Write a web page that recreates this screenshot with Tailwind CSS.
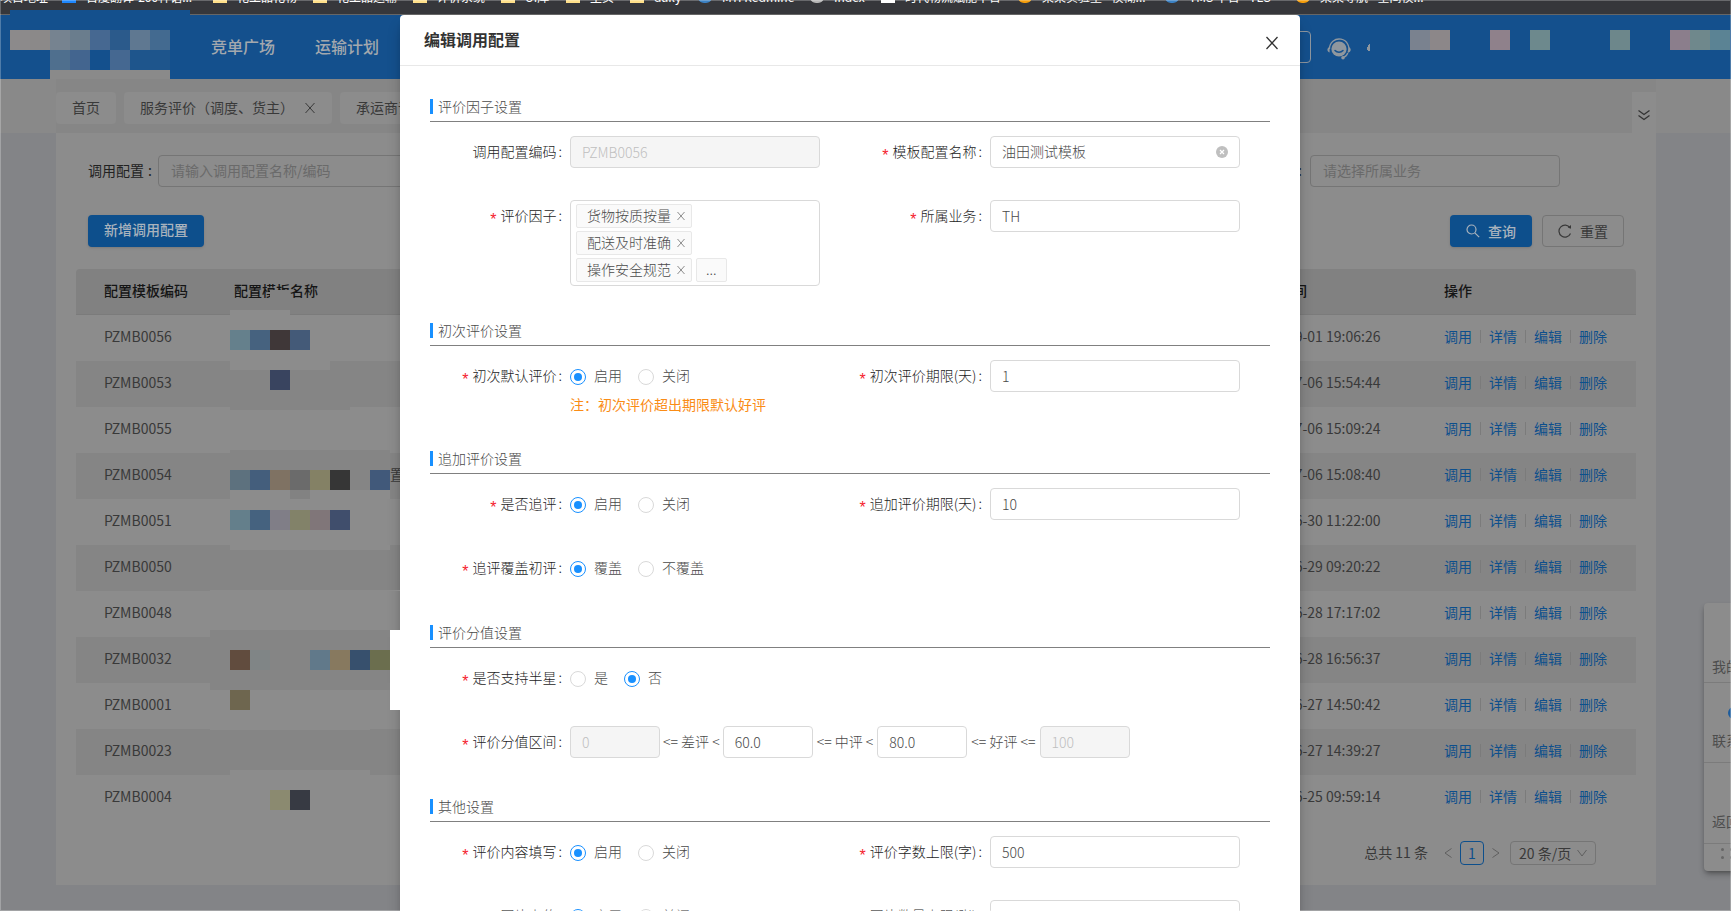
<!DOCTYPE html>
<html lang="zh-CN">
<head>
<meta charset="utf-8">
<title>编辑调用配置</title>
<script src="https://cdn.jsdelivr.net/npm/@tailwindcss/browser@4"></script>
</head>
<body class="relative h-screen overflow-hidden bg-[#838487] font-['Noto_Sans_CJK_SC',sans-serif] text-sm text-[#393939]">

<!-- Browser bookmark bar, scrolled almost out of view -->
<nav class="h-[15px] overflow-hidden border-b border-[#666] bg-[#36373b] text-xs text-white" aria-label="书签">
  <div class="-mt-3 flex h-[18px] items-center whitespace-nowrap leading-[18px]" id="bookmarks"></div>
</nav>

<header class="flex h-16 items-center bg-[#14508d] pl-[211px] pr-[380px] text-base font-medium text-[#a3a8ae]">
  <a href="#" class="w-[104px] pb-0.5">竞单广场</a>
  <a href="#" class="pb-0.5">运输计划</a>
  <div class="ml-auto flex items-center gap-4">
    <div class="h-8 w-[200px] rounded border border-[#8e969f]"></div>
    <svg class="mt-1 h-6 w-6" viewBox="0 0 24 24" fill="none">
      <path d="M2.500 12a9.700 9.700 0 1 1 18.600 3.600M20.800 16c-1 2.600-2.900 4-4.800 4.600" stroke="#8f979e" stroke-width="1.300"/>
      <circle cx="12" cy="12" r="7.600" fill="#8f979e"/>
      <path d="M8 13.500c2.200 2.300 5.800 2.300 8 0" stroke="#14508d" stroke-width="1.500" stroke-linecap="round"/>
      <path d="M2.600 10v5.500C1 15 .4 14 .4 12.800s.6-2.300 2.200-2.800zM21.600 10v5.500c1.600-.5 2.100-1.500 2.100-2.700s-.5-2.300-2.100-2.800z" fill="#8f979e"/>
      <circle cx="16" cy="20.800" r="1.800" fill="#8f979e"/>
    </svg>
  </div>
</header>

<!-- Page tabs -->
<div class="flex h-[54px] items-start bg-[#898989] px-14 pr-[75px]">
  <div class="flex h-full w-full items-start gap-2 bg-[#868686] pt-[13px]">
    <a href="#" class="flex h-8 items-center rounded bg-[#8c8c8c] px-4 pb-0.5">首页</a>
    <div class="flex h-8 w-[208px] shrink-0 items-center justify-between rounded bg-[#8c8c8c] px-4">
      <a href="#" class="pb-0.5">服务评价（调度、货主）</a>
      <button type="button" aria-label="关闭标签"><svg class="h-3 w-3" viewBox="0 0 12 12" stroke="#393939" fill="none"><path d="M1.500 1l9 10M10.500 1l-9 10"/></svg></button>
    </div>
    <a href="#" class="flex h-8 items-center rounded bg-[#8c8c8c] px-4 pb-0.5">承运商评价</a>
    <button type="button" aria-label="展开" class="ml-auto flex h-[41px] w-6 items-center justify-center bg-[#8c8c8c] pt-1">
      <svg class="h-3 w-3" viewBox="0 0 12 12" stroke="#333" stroke-width="1.300" fill="none"><path d="M.5 1.500L6 5.500l5.500-4M.5 6.500L6 10.500l5.500-4"/></svg>
    </button>
  </div>
</div>

<main class="ml-14 mr-[75px] h-[752px] bg-[#8c8c8c] px-5 pt-[22px]">
  <div class="flex items-center justify-between pl-3 pr-[76px]">
    <div class="flex items-center">
      <label for="q1" class="w-[70px] pb-[3px] text-[#222]">调用配置<span class="ml-1">:</span></label>
      <input id="q1" type="text" placeholder="请输入调用配置名称/编码" class="h-8 w-[250px] rounded border border-[#757575] bg-transparent px-3 pb-0.5 placeholder:text-[#6a6a6a]">
    </div>
    <div class="flex items-center gap-2">
      <label for="q2" class="pb-0.5 text-[#222]">所属业务 :</label>
      <input id="q2" type="text" placeholder="请选择所属业务" class="h-8 w-[250px] rounded border border-[#757575] bg-transparent px-3 pb-0.5 placeholder:text-[#6a6a6a]">
    </div>
  </div>

  <div class="mt-7 flex items-center justify-between pl-3 pr-3">
    <button type="button" class="h-8 w-[116px] rounded bg-[#0d4f8c] pb-1 font-medium text-[#a9b3bd] shadow-sm">新增调用配置</button>
    <div class="flex gap-[10px]">
      <button type="button" class="flex h-8 w-[82px] items-center justify-center gap-2 rounded bg-[#0d4f8c] font-medium text-[#a9b3bd] shadow-sm">
        <svg class="h-[14px] w-[14px]" viewBox="0 0 14 14" fill="none" stroke="#a9b3bd" stroke-width="1.200"><circle cx="5.500" cy="5.500" r="4.500"/><path d="M8.800 8.800l4.400 4.400"/></svg>查询
      </button>
      <button type="button" class="flex h-8 w-[82px] items-center justify-center gap-2 rounded border border-[#757575]">
        <svg class="h-[14px] w-[14px]" viewBox="0 0 14 14" fill="none" stroke="#393939" stroke-width="1.200"><path d="M12 3.800A6 6 0 1 0 12.500 9.500"/><path d="M13 1v3.800L9.800 3.600z" fill="#393939" stroke="none"/></svg>重置
      </button>
    </div>
  </div>

  <table class="mt-[22px] w-full table-fixed border-separate border-spacing-0 text-left">
    <colgroup><col class="w-[130px]"><col><col class="w-[193px]"><col class="w-[220px]"></colgroup>
    <thead>
      <tr class="h-[46px] text-[#151515]">
        <th class="rounded-tl border-b border-[#7b7b7b] bg-[#818181] pb-1 pl-7 font-medium">配置模板编码</th>
        <th class="border-b border-[#7b7b7b] bg-[#818181] pb-1 pl-7 font-medium">配置模板名称</th>
        <th class="border-b border-[#7b7b7b] bg-[#818181] pb-1 pl-7 font-medium">更新时间</th>
        <th class="rounded-tr border-b border-[#7b7b7b] bg-[#818181] pb-1 pl-7 font-medium">操作</th>
      </tr>
    </thead>
    <tbody id="rows"></tbody>
  </table>

  <div class="mt-5 flex h-6 items-center justify-end pr-10">
    <span class="pb-0.5">总共 11 条</span>
    <button type="button" aria-label="上一页" class="ml-4 flex h-6 w-4 items-center"><svg class="h-3 w-2" viewBox="0 0 8 12" fill="none" stroke="#5f5f5f"><path d="M7.500 1.500L1 6l6.500 4.500"/></svg></button>
    <button type="button" class="h-6 w-6 rounded border border-[#0d4f8c] text-[#0d4f8c] leading-5">1</button>
    <button type="button" aria-label="下一页" class="ml-2 flex h-6 w-[18px] items-center"><svg class="h-3 w-2" viewBox="0 0 8 12" fill="none" stroke="#5f5f5f"><path d="M.5 1.500L7 6 .5 10.500"/></svg></button>
    <div class="relative flex items-center">
      <select aria-label="每页条数" class="h-6 w-[86px] appearance-none rounded border border-[#757575] bg-transparent pl-2 leading-5"><option>20 条/页</option></select>
      <svg class="pointer-events-none absolute right-[9px] h-[10px] w-[10px]" viewBox="0 0 10 10" fill="none" stroke="#5f5f5f"><path d="M.5 2L5 8l4.500-6"/></svg>
    </div>
  </div>
</main>

<!-- Floating side tools -->
<aside class="absolute left-[1704px] top-[603px] h-[268px] w-[72px] rounded bg-[#8c8c8c] text-[#4d4d4d] shadow-md shadow-black/30">
  <a href="#" class="flex h-20 items-end border-b border-[#7b7b7b] pb-[6px] pl-2">我的消息</a>
  <a href="#" class="relative flex h-20 items-end border-b border-[#7b7b7b] pb-3 pl-2"><span class="absolute left-6 top-6 h-3 w-6 rounded-full bg-[#1d5c9c]"></span>联系客服</a>
  <a href="#" class="flex h-[81px] items-end border-b border-[#7b7b7b] pb-3 pl-2">返回顶部</a>
  <div class="ml-[17px] mt-1 grid w-3 grid-cols-2 gap-[5px]">
    <i class="h-[3px] w-[3px] rounded-full bg-[#666]"></i><i class="h-[3px] w-[3px] rounded-full bg-[#666]"></i>
    <i class="h-[3px] w-[3px] rounded-full bg-[#666]"></i><i class="h-[3px] w-[3px] rounded-full bg-[#666]"></i>
  </div>
</aside>

<!-- Dialog -->
<div class="absolute inset-x-0 bottom-0 top-[15px] flex justify-center overflow-hidden pr-[31px]">
  <form role="dialog" aria-labelledby="dlg" class="h-[1100px] w-[900px] rounded-t bg-white font-light text-[#4a4a4a] shadow-lg shadow-black/30">
    <div class="flex h-[51px] items-center justify-between border-b border-[#e8e8e8] pl-6 pr-[21px]">
      <h1 id="dlg" class="pb-0.5 text-base font-bold text-[#333]">编辑调用配置</h1>
      <button type="button" aria-label="关闭" class="pt-[6px]"><svg class="h-[14px] w-[14px]" viewBox="0 0 14 14" fill="none" stroke="#333" stroke-width="1.300"><path d="M1.500 1l11 12M12.500 1l-11 12"/></svg></button>
    </div>
    <div class="px-[30px] pt-[26px]">

      <section class="mb-[30px]">
        <h2 class="flex h-[30px] items-center gap-[5px] border-b border-[#808080]"><span class="h-[15px] w-[3px] bg-[#1890ff]"></span><span class="pb-px">评价因子设置</span></h2>
        <div class="grid grid-cols-2 gap-y-8 pt-[14px]">
          <div class="flex h-8">
            <label for="code" class="w-[140px] pr-2 text-right leading-[30px] text-[#1c1c1c]">调用配置编码<span class="ml-0.5">:</span></label>
            <input id="code" disabled value="PZMB0056" class="h-8 w-[250px] rounded border border-[#d9d9d9] bg-[#f5f5f5] px-[11px] text-[#bfbfbf]">
          </div>
          <div class="flex h-8">
            <label for="name" class="w-[140px] pr-2 text-right leading-[30px] text-[#1c1c1c]"><span class="mr-1 inline-block font-['Liberation_Sans'] text-base leading-none font-normal text-[#f5222d] align-[-4px]">*</span>模板配置名称<span class="ml-0.5">:</span></label>
            <div class="relative flex h-8 items-center">
              <input id="name" value="油田测试模板" class="h-8 w-[250px] rounded border border-[#d9d9d9] px-[11px] pb-0.5">
              <button type="button" aria-label="清空" class="absolute right-3"><svg class="h-3 w-3" viewBox="0 0 12 12"><circle cx="6" cy="6" r="6" fill="#bfbfbf"/><path d="M4 4l4 4M8 4l-4 4" stroke="#fff" stroke-width="1.200"/></svg></button>
            </div>
          </div>
          <div class="flex">
            <span class="w-[140px] pr-2 text-right leading-[30px] text-[#1c1c1c]"><span class="mr-1 inline-block font-['Liberation_Sans'] text-base leading-none font-normal text-[#f5222d] align-[-4px]">*</span>评价因子<span class="ml-0.5">:</span></span>
            <div class="flex w-[250px] flex-wrap gap-x-1 gap-y-[3px] rounded border border-[#d9d9d9] py-[3px] pl-[5px] pr-4">
              <span class="flex h-6 w-[116px] items-center gap-[6px] rounded-xs border border-[#e8e8e8] bg-[#fafafa] pl-[10px]"><span class="pb-0.5">货物按质按量</span><button type="button" aria-label="移除"><svg class="h-2 w-2" viewBox="0 0 8 8" stroke="#8c8c8c" fill="none"><path d="M.5 0l7 8M7.500 0l-7 8"/></svg></button></span>
              <span class="flex h-6 w-[116px] items-center gap-[6px] rounded-xs border border-[#e8e8e8] bg-[#fafafa] pl-[10px]"><span class="pb-0.5">配送及时准确</span><button type="button" aria-label="移除"><svg class="h-2 w-2" viewBox="0 0 8 8" stroke="#8c8c8c" fill="none"><path d="M.5 0l7 8M7.500 0l-7 8"/></svg></button></span>
              <span class="flex h-6 w-[116px] items-center gap-[6px] rounded-xs border border-[#e8e8e8] bg-[#fafafa] pl-[10px]"><span class="pb-0.5">操作安全规范</span><button type="button" aria-label="移除"><svg class="h-2 w-2" viewBox="0 0 8 8" stroke="#8c8c8c" fill="none"><path d="M.5 0l7 8M7.500 0l-7 8"/></svg></button></span>
              <span class="flex h-6 items-center rounded-xs border border-[#e8e8e8] bg-[#fafafa] px-[9px] pb-0.5">...</span>
            </div>
          </div>
          <div class="flex">
            <label for="biz" class="w-[140px] pr-2 text-right leading-[30px] text-[#1c1c1c]"><span class="mr-1 inline-block font-['Liberation_Sans'] text-base leading-none font-normal text-[#f5222d] align-[-4px]">*</span>所属业务<span class="ml-0.5">:</span></label>
            <input id="biz" value="TH" class="h-8 w-[250px] rounded border border-[#d9d9d9] px-[11px]">
          </div>
        </div>
      </section>

      <section class="mb-[30px]">
        <h2 class="flex h-[30px] items-center gap-[5px] border-b border-[#808080]"><span class="h-[15px] w-[3px] bg-[#1890ff]"></span><span class="pb-px">初次评价设置</span></h2>
        <div class="grid grid-cols-2 pt-[14px]">
          <div class="flex h-8" data-radio="r1|初次默认评价|启用|关闭|0"></div>
          <div class="flex h-8">
            <label for="d1" class="w-[140px] pr-2 text-right leading-[30px] text-[#1c1c1c]"><span class="mr-1 inline-block font-['Liberation_Sans'] text-base leading-none font-normal text-[#f5222d] align-[-4px]">*</span>初次评价期限(天)<span class="ml-0.5">:</span></label>
            <input id="d1" value="1" class="h-8 w-[250px] rounded border border-[#d9d9d9] px-[11px]">
          </div>
          <p class="ml-[140px] mt-0.5 leading-5 font-normal text-[#fa8c16]">注：初次评价超出期限默认好评</p>
        </div>
      </section>

      <section class="mb-[34px]">
        <h2 class="flex h-[30px] items-center gap-[5px] border-b border-[#808080]"><span class="h-[15px] w-[3px] bg-[#1890ff]"></span><span class="pb-px">追加评价设置</span></h2>
        <div class="grid grid-cols-2 gap-y-8 pt-[14px]">
          <div class="flex h-8" data-radio="r2|是否追评|启用|关闭|0"></div>
          <div class="flex h-8">
            <label for="d2" class="w-[140px] pr-2 text-right leading-[30px] text-[#1c1c1c]"><span class="mr-1 inline-block font-['Liberation_Sans'] text-base leading-none font-normal text-[#f5222d] align-[-4px]">*</span>追加评价期限(天)<span class="ml-0.5">:</span></label>
            <input id="d2" value="10" class="h-8 w-[250px] rounded border border-[#d9d9d9] px-[11px]">
          </div>
          <div class="flex h-8" data-radio="r3|追评覆盖初评|覆盖|不覆盖|0"></div>
        </div>
      </section>

      <section class="mb-[34px]">
        <h2 class="flex h-[30px] items-center gap-[5px] border-b border-[#808080]"><span class="h-[15px] w-[3px] bg-[#1890ff]"></span><span class="pb-px">评价分值设置</span></h2>
        <div class="flex flex-col gap-8 pt-[14px]">
          <div class="flex h-8" data-radio="r4|是否支持半星|是|否|1"></div>
          <div class="flex h-8 items-center whitespace-nowrap">
            <label for="s0" class="h-8 w-[140px] pr-2 text-right leading-[30px] text-[#1c1c1c]"><span class="mr-1 inline-block font-['Liberation_Sans'] text-base leading-none font-normal text-[#f5222d] align-[-4px]">*</span>评价分值区间<span class="ml-0.5">:</span></label>
            <input id="s0" disabled value="0" class="h-8 w-[90px] rounded border border-[#d9d9d9] bg-[#f5f5f5] px-[11px] text-[#bfbfbf]">
            <span class="px-[3px] pb-0.5">&lt;= 差评 &lt;</span>
            <input aria-label="差评上限" value="60.0" class="h-8 w-[90px] rounded border border-[#d9d9d9] px-[11px]">
            <span class="px-1 pb-0.5">&lt;= 中评 &lt;</span>
            <input aria-label="中评上限" value="80.0" class="h-8 w-[90px] rounded border border-[#d9d9d9] px-[11px]">
            <span class="px-1 pb-0.5">&lt;= 好评 &lt;=</span>
            <input aria-label="好评上限" disabled value="100" class="h-8 w-[90px] rounded border border-[#d9d9d9] bg-[#f5f5f5] px-[11px] text-[#bfbfbf]">
          </div>
        </div>
      </section>

      <section>
        <h2 class="flex h-[30px] items-center gap-[5px] border-b border-[#808080]"><span class="h-[15px] w-[3px] bg-[#1890ff]"></span><span class="pb-px">其他设置</span></h2>
        <div class="grid grid-cols-2 gap-y-8 pt-[14px]">
          <div class="flex h-8" data-radio="r5|评价内容填写|启用|关闭|0"></div>
          <div class="flex h-8">
            <label for="n1" class="w-[140px] pr-2 text-right leading-[30px] text-[#1c1c1c]"><span class="mr-1 inline-block font-['Liberation_Sans'] text-base leading-none font-normal text-[#f5222d] align-[-4px]">*</span>评价字数上限(字)<span class="ml-0.5">:</span></label>
            <input id="n1" value="500" class="h-8 w-[250px] rounded border border-[#d9d9d9] px-[11px]">
          </div>
          <div class="flex h-8" data-radio="r6|图片上传|启用|关闭|0"></div>
          <div class="flex h-8">
            <label for="n2" class="w-[140px] pr-2 text-right leading-[30px] text-[#1c1c1c]"><span class="mr-1 inline-block font-['Liberation_Sans'] text-base leading-none font-normal text-[#f5222d] align-[-4px]">*</span>图片数量上限(张)<span class="ml-0.5">:</span></label>
            <input id="n2" value="5" class="h-8 w-[250px] rounded border border-[#d9d9d9] px-[11px]">
          </div>
        </div>
      </section>
    </div>
  </form>
</div>

<!-- Mosaic blocks that hide private names -->
<svg class="pointer-events-none absolute left-0 top-0 h-[911px] w-[1731px]" shape-rendering="crispEdges" aria-hidden="true" id="mosaic"></svg>

<!-- Thin window frame -->
<div class="pointer-events-none absolute inset-0 border border-white/25"></div>

<script>
const rowData = [
  ['PZMB0056', '2023-09-01 19:06:26'], ['PZMB0053', '2023-07-06 15:54:44'], ['PZMB0055', '2023-07-06 15:09:24'],
  ['PZMB0054', '2023-07-06 15:08:40', '配置模板测试用配置'], ['PZMB0051', '2023-06-30 11:22:00'], ['PZMB0050', '2023-06-29 09:20:22'],
  ['PZMB0048', '2023-06-28 17:17:02'], ['PZMB0032', '2023-06-28 16:56:37'], ['PZMB0001', '2023-06-27 14:50:42'],
  ['PZMB0023', '2023-06-27 14:39:27'], ['PZMB0004', '2023-06-25 09:59:14']];
document.getElementById('rows').innerHTML = rowData.map(([id, time, name]) => `
  <tr class="h-[46px] even:bg-[#858585]">
    <td class="pb-1 pl-7">${id}</td>
    <td class="pb-1 pl-[72px]">${name || ''}</td>
    <td class="pb-1 pl-7">${time}</td>
    <td class="pb-1 pl-7"><div class="flex items-center gap-2 text-[#0d4f8c]">${['调用', '详情', '编辑', '删除'].map(t => `<a href="#">${t}</a>`).join('<i class="h-[13px] w-px bg-[#7b7b7b]"></i>')}</div></td>
  </tr>`).join('');

/* Radio groups: name | label | first | second | checked index */
document.querySelectorAll('[data-radio]').forEach(el => {
  const [n, label, a, b, on] = el.dataset.radio.split('|');
  el.innerHTML = `<span class="w-[140px] pr-2 text-right leading-[30px] text-[#1c1c1c]"><span class="mr-1 inline-block font-['Liberation_Sans'] text-base leading-none font-normal text-[#f5222d] align-[-4px]">*</span>${label}<span class="ml-0.5">:</span></span>
    <span class="flex h-8 items-center gap-4">` + [a, b].map((t, i) => `<label class="flex items-center gap-2"><input type="radio" name="${n}" ${i == on ? 'checked' : ''} class="mt-0.5 grid h-4 w-4 appearance-none place-content-center rounded-full border border-[#d9d9d9] before:h-2 before:w-2 before:rounded-full before:content-[''] checked:border-[#1890ff] checked:before:bg-[#1890ff]"><span class="pb-0.5">${t}</span></label>`).join('') + '</span>';
});

/* Bookmarks: item width, icon colour, text */
const marks = [[62, '', '项目地址'], [151, 'bg-[#1e88ff]', '百度翻译-200种语...'], [100, 'bg-[#ffe08a]', '化工品化物'], [100, 'bg-[#ffe08a]', '化工品运输'],
  [88, 'bg-[#ffe08a]', '评价系统'], [65, 'bg-[#ffe08a]', 'UI库'], [64, 'bg-[#ffe08a]', '主页'], [68, 'bg-[#ffe08a]', 'daily'],
  [112, 'bg-[#3b82c4] rounded-full', 'MYI Redmine'], [71, 'bg-[#b5b5b5] rounded-full', 'Index'], [137, 'bg-white', '时代物流赋能平台'],
  [147, 'bg-[#f59e0b] rounded-full', '某某实验室 - 模糊...'], [131, 'bg-[#3b82c4] rounded-full', 'TMS 平台 - TES'], [140, 'bg-[#f59e0b] rounded-full', '某某导航 - 空间模...']];
document.getElementById('bookmarks').innerHTML = marks.map(([w, c, t]) =>
  `<a href="#" class="flex shrink-0 items-center gap-[10px]" style="width:${w}px">${c ? `<i class="h-3 w-[14px] shrink-0 ${c}"></i>` : ''}<span>${t}</span></a>`).join('');

/* Mosaic: x, y, width, height, colour */
const L = '#8c8c8c', D = '#858585';
const tiles = [[10,10,180,5,'#14508d'],
  [10,30,20,20,'#8c8a8b'],[30,30,20,20,'#8b8989'],[50,30,20,20,'#768390'],[70,30,20,20,'#6a7d8d'],[90,30,20,20,'#466891'],[110,30,20,20,'#2b5a8b'],[130,30,20,20,'#5f7891'],[150,30,20,20,'#436a90'],
  [50,50,20,20,'#4f6f8e'],[70,50,20,20,'#43658f'],[110,50,20,20,'#456891'],[130,50,40,20,'#1e558c'],[50,70,120,9,'#8a8a8a'],
  [1410,30,20,20,'#7a828f'],[1430,30,20,20,'#8c8789'],[1490,30,20,20,'#8f818b'],[1530,30,20,20,'#6d898d'],[1610,30,20,20,'#6d878b'],[1670,30,20,20,'#8b7e8c'],[1690,30,20,20,'#6f888c'],[1710,30,20,20,'#5b8394'],
  [270,290,20,20,'#818181'],[230,310,60,5,L],[230,361,100,9,L],
  [230,330,20,20,'#65808c'],[250,330,20,20,'#46627f'],[270,330,20,20,'#3f3738'],[290,330,20,20,'#445a78'],
  [270,370,20,20,'#39445f'],[230,407,120,3,D],[230,450,160,49,D],
  [230,470,20,20,'#5d717e'],[250,470,20,20,'#445e7c'],[270,470,20,20,'#7f7263'],[290,470,20,20,'#6b6b6b'],[310,470,20,20,'#848165'],[330,470,20,20,'#363636'],[370,470,20,20,'#41597a'],
  [230,490,60,9,L],[290,490,20,9,'#828282'],[310,490,80,9,L],
  [230,510,20,20,'#647f8b'],[250,510,20,20,'#45627f'],[270,510,20,20,'#807e87'],[290,510,20,20,'#828269'],[310,510,20,20,'#807679'],[330,510,20,20,'#404e6c'],[230,545,160,5,L],
  [210,590,190,1,L],[210,630,180,7,D],[210,683,180,7,D],
  [230,650,20,20,'#614c3e'],[250,650,20,20,'#808586'],[310,650,20,20,'#61798a'],[330,650,20,20,'#87795f'],[350,650,20,20,'#37506d'],[370,650,20,20,'#6b6e4e'],
  [230,690,20,20,'#6e664f'],[210,729,160,1,L],[230,770,140,5,L],[270,790,20,20,'#8b8a70'],[290,790,20,20,'#373a43'],[390,630,10,80,'#fff']];
document.getElementById('mosaic').innerHTML = tiles.map(([x, y, w, h, c]) => `<rect x="${x}" y="${y}" width="${w}" height="${h}" fill="${c}"/>`).join('') +
  '<path d="M1370 44c-3 2-4 5-2 7h2z" fill="#8f979e"/>';
</script>
</body>
</html>
